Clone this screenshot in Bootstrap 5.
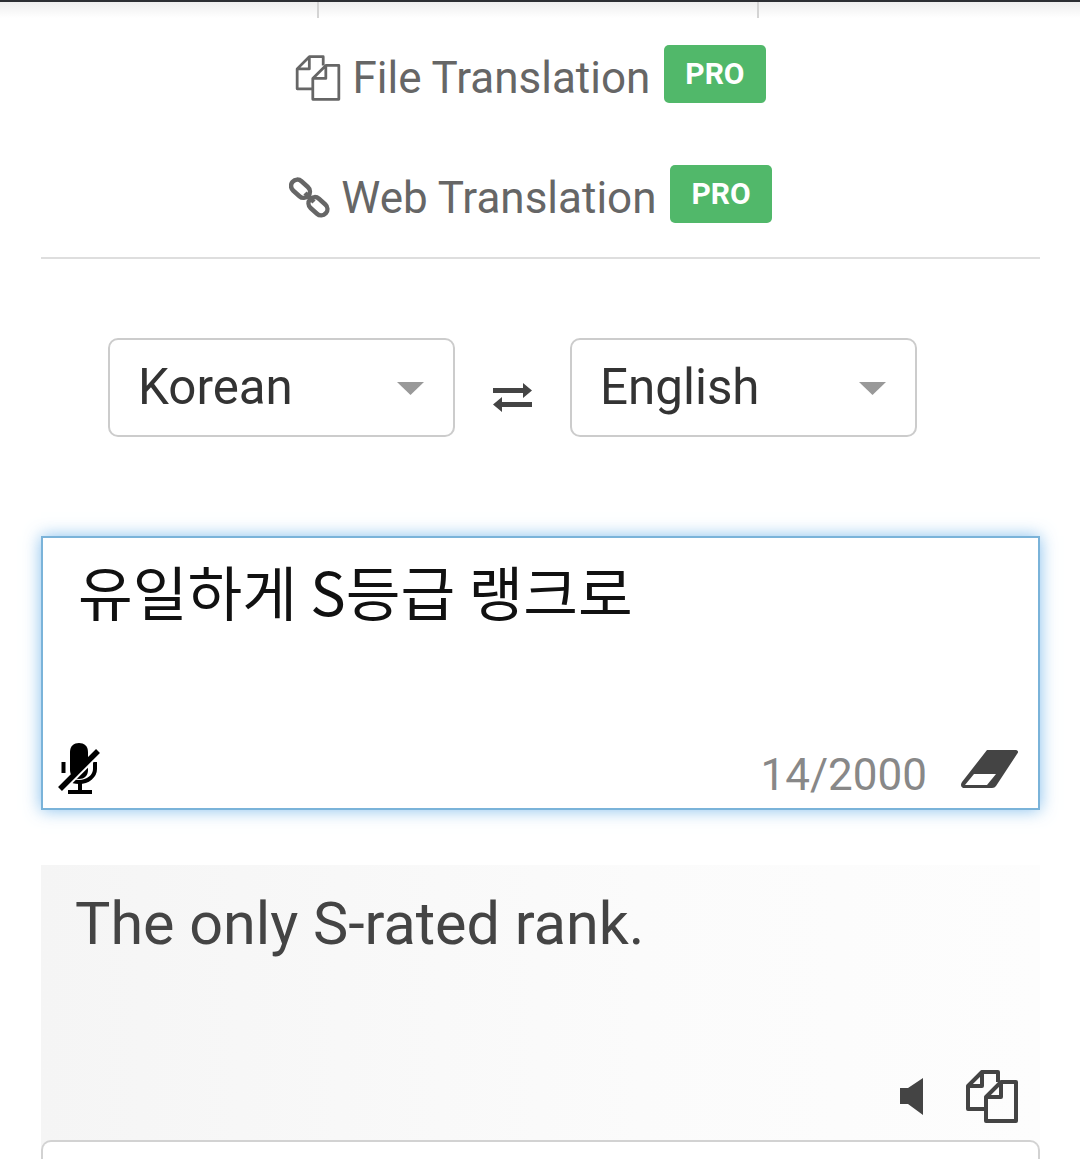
<!DOCTYPE html>
<html lang="en">
<head>
  <meta charset="UTF-8">
  <meta name="viewport" content="width=device-width, initial-scale=1.0">
  <title>Translator</title>
  <link href="https://cdn.jsdelivr.net/npm/bootstrap@5.3.0/dist/css/bootstrap.min.css" rel="stylesheet">
  <style>
    body { font-family: Roboto, "Liberation Sans", sans-serif; background: #fff; overflow: hidden; height: 1159px; }
    .top-strip { height: 18px; border-top: 2px solid #2c2e33; background: linear-gradient(#eee, #fff); padding-left: 317px; }
    .top-ticks { width: 442px; height: 16px; border-left: 2px solid #d4d4d4; border-right: 2px solid #d4d4d4; }
    .page-wrap { padding: 0 40px 0 41px; margin-top: -3px; }
    .pro-row { height: 120px; color: #666; font-size: 44px; gap: 14px; padding-right: 20px; }
    .pro-row svg { flex: none; }
    .pro-label { display: flex; align-items: center; gap: 11px; padding-top: 5px; }
    .pro-tag { background: #51b86a; color: #fff; font-size: 30px; font-weight: 700; line-height: 1; padding: 14px 21px; border-radius: 5px; margin-top: -2px; }
    .split-line { border-top: 2px solid #dedede; margin-top: 2px; }
    .lang-row { margin: 79px 0 0 67px; gap: 37px; }
    .lang-select { width: 347px; height: 99px; font-size: 49.3px; color: #333; border: 2px solid #ccc; border-radius: 10px; padding: 0 60px 0 28px;
      background-image: url("data:image/svg+xml,%3Csvg xmlns='http://www.w3.org/2000/svg' viewBox='0 0 27 13'%3E%3Cpath fill='%23999' d='M0 0H27L13.5 13Z'/%3E%3C/svg%3E");
      background-size: 27px 13px; background-position: 287px 42px; background-repeat: no-repeat; }
    .lang-select:focus { border-color: #ccc; box-shadow: none; }
    .swap-btn { width: 41px; flex: none; margin-top: 19px; }
    .src-box { height: 274px; margin-top: 99px; border: 2px solid #7ab3d9; box-shadow: 0 0 16px rgba(102, 175, 233, .8); }
    .src-text { font-family: "Noto Sans CJK KR", Roboto, sans-serif; font-size: 59.5px; line-height: 1; color: #111; padding: 23px 0 0 35px; }
    .src-tools { padding: 0 19px 14px 15px; }
    .char-count { font-size: 44px; line-height: 1; color: #888; margin: 0 33px -3px 0; }
    .eraser-icon { margin-bottom: 5px; }
    .out-box { height: 300px; margin-top: 55px; background: linear-gradient(to right, #f5f5f5, #fbfbfb 60%, #fdfdfd); padding: 25px 22px 0 34px; }
    .out-text { font-size: 59.3px; line-height: 68px; color: #444; margin: 0; }
    .out-tools { gap: 42px; margin-top: 112px; }
    .next-box { height: 60px; margin-top: -25px; position: relative; background: #fff; border: 2px solid #d2d2d2; border-bottom: 0; border-radius: 10px 10px 0 0; }
  </style>
</head>
<body>
  <div class="top-strip"><div class="top-ticks"></div></div>

  <div class="page-wrap">
    <!-- tabs -->
    <div class="pro-row d-flex align-items-center justify-content-center">
      <span class="pro-label">
        <svg width="46" height="46" viewBox="0 0 52 53" fill="none" stroke="#666" stroke-width="3.2" stroke-linejoin="round"><path d="M16 2H32V12M20 39H2V16L16 2V16H2"/><path d="M35 12H50V51H20V27L35 12V27H20"/></svg>
        File Translation
      </span>
      <span class="pro-tag">PRO</span>
    </div>
    <div class="pro-row d-flex align-items-center justify-content-center">
      <span class="pro-label">
        <svg width="41" height="41" viewBox="0 0 41 41" fill="none" stroke="#666" stroke-width="4.5"><rect x="1" y="5.5" width="21" height="12.5" rx="6.2" transform="rotate(42 11.5 11.7)"/><rect x="18.5" y="23" width="21" height="12.5" rx="6.2" transform="rotate(42 29 29.2)"/><path d="M16 16L25 25"/></svg>
        Web Translation
      </span>
      <span class="pro-tag">PRO</span>
    </div>
    <div class="split-line"></div>

    <!-- language pickers -->
    <div class="lang-row d-flex align-items-center">
      <select class="form-select lang-select"><option>Korean</option></select>
      <svg class="swap-btn" width="41" height="31" viewBox="0 0 41 31" fill="#444"><path d="M1 6H31V1L40 8.5L31 16V11H1Z"/><path d="M40 20H10V15L1 22.5L10 30V25H40Z"/></svg>
      <select class="form-select lang-select"><option>English</option></select>
    </div>

    <!-- source text -->
    <div class="src-box d-flex flex-column justify-content-between">
      <div class="src-text">유일하게 S등급 랭크로</div>
      <div class="src-tools d-flex align-items-end justify-content-between">
        <svg width="44" height="52" viewBox="0 0 44 52" fill="none">
          <path d="M12 28V10C12 4 16 1 21 1C26 1 30 4 30 10V28C30 34 26 37 21 37C16 37 12 34 12 28Z" fill="#000"/>
          <path d="M5.5 20V31M37 20V27C37 34 30 40 21 40C17 40 14 39 12 37" stroke="#000" stroke-width="4"/>
          <path d="M22 40V49M10 50H34" stroke="#000" stroke-width="4"/>
          <path d="M3.5 48.5L41.5 10.5" stroke="#fff" stroke-width="5.3"/>
          <path d="M2 47L40 9" stroke="#000" stroke-width="5.5"/>
        </svg>
        <div class="d-flex align-items-end">
          <span class="char-count">14/2000</span>
          <svg class="eraser-icon" width="59" height="40" viewBox="0 0 59 40"><path d="M27 1H55C58 1 59 3 57 5L36 37C35 38 34 39 32 39H5C1 39 0 36 2 33Z" fill="#444"/><path d="M14 25H36L27 36H5Z" fill="#fff"/></svg>
        </div>
      </div>
    </div>

    <!-- translated text -->
    <div class="out-box">
      <p class="out-text">The only S-rated rank.</p>
      <div class="out-tools d-flex align-items-center justify-content-end">
        <svg width="24" height="38" viewBox="0 0 24 38" fill="#444"><path d="M0 10H8L23 0V37L8 26H0Z"/></svg>
        <svg width="52" height="53" viewBox="0 0 52 53" fill="none" stroke="#444" stroke-width="4" stroke-linejoin="round"><path d="M16 2H32V12M20 39H2V16L16 2V16H2"/><path d="M35 12H50V51H20V27L35 12V27H20"/></svg>
      </div>
    </div>
    <div class="next-box"></div>
  </div>

  <script src="https://cdn.jsdelivr.net/npm/bootstrap@5.3.0/dist/js/bootstrap.bundle.min.js"></script>
</body>
</html>
